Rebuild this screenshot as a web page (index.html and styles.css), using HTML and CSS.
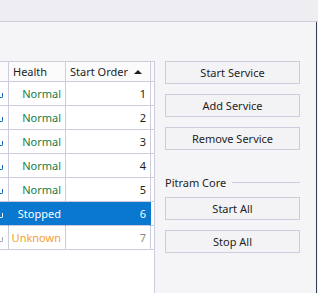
FILE: index.html
```html
<!DOCTYPE html>
<html lang="en">
<head>
    <meta charset="UTF-8">
    <title>Services</title>
    <link rel="stylesheet" href="styles.css">
</head>
<body>
    <div class="window">
        <div class="titlebar"></div>
        <div class="main">
            <div class="grid">
                <div class="row head">
                    <div class="cell"></div>
                    <div class="cell">Health</div>
                    <div class="cell sort">Start Order <span class="arrow"></span></div>
                    <div class="cell fill"></div>
                </div>
                <div class="row">
                    <div class="cell name"><span class="stub"></span></div>
                    <div class="cell num ok">Normal</div>
                    <div class="cell num">1</div>
                    <div class="cell fill"></div>
                </div>
                <div class="row">
                    <div class="cell name"><span class="stub"></span></div>
                    <div class="cell num ok">Normal</div>
                    <div class="cell num">2</div>
                    <div class="cell fill"></div>
                </div>
                <div class="row">
                    <div class="cell name"><span class="stub"></span></div>
                    <div class="cell num ok">Normal</div>
                    <div class="cell num">3</div>
                    <div class="cell fill"></div>
                </div>
                <div class="row">
                    <div class="cell name"><span class="stub"></span></div>
                    <div class="cell num ok">Normal</div>
                    <div class="cell num">4</div>
                    <div class="cell fill"></div>
                </div>
                <div class="row">
                    <div class="cell name"><span class="stub"></span></div>
                    <div class="cell num ok">Normal</div>
                    <div class="cell num">5</div>
                    <div class="cell fill"></div>
                </div>
                <div class="row selected">
                    <div class="cell name"><span class="stub"></span></div>
                    <div class="cell num">Stopped</div>
                    <div class="cell num">6</div>
                    <div class="cell fill"></div>
                </div>
                <div class="row muted">
                    <div class="cell name"><span class="stub"></span></div>
                    <div class="cell num unknown">Unknown</div>
                    <div class="cell num">7</div>
                    <div class="cell fill"></div>
                </div>
            </div>
            <div class="panel">
                <button class="btn">Start Service</button>
                <button class="btn">Add Service</button>
                <button class="btn">Remove Service</button>
                <div class="group">Pitram Core</div>
                <button class="btn">Start All</button>
                <button class="btn">Stop All</button>
            </div>
        </div>
    </div>
</body>
</html>
```
FILE: styles.css
```css
body {
    margin: 0;
    font-family: "Segoe UI", "Noto Sans", sans-serif;
    font-size: 11px;
    color: #1e1e1e;
}

.window {
    width: 318px;
    height: 293px;
    overflow: hidden;
    background: #f5f5f7;
    display: flex;
    flex-direction: column;
}

.titlebar {
    height: 21px;
    background: #eeeef2;
    border-bottom: 1px solid #ccccdc;
}

.main {
    flex: 1;
    display: flex;
    border-right: 1px solid #2e3c58;
    margin-right: 1px;
}

.grid {
    width: 155px;
    box-sizing: border-box;
    margin-top: 39px;
    background: #fff;
    border-top: 1px solid #ccccdc;
    border-right: 1px solid #ccccdc;
}

.row {
    display: grid;
    grid-template-columns: 9px 57px 85px 3px;
    height: 24px;
}

.row.head {
    height: 20px;
    background: #fbfbfc;
}

.cell {
    box-sizing: border-box;
    border-right: 1px solid #ccccdc;
    border-bottom: 1px solid #ccccdc;
    display: flex;
    align-items: center;
    padding: 0 4px;
    white-space: nowrap;
    overflow: hidden;
}

.cell.fill {
    border-right: none;
    padding: 0;
}

.cell.num {
    justify-content: flex-end;
}

/* the clipped end of a column that is scrolled out of view */
.cell.name {
    padding: 3px 0 0 0;
    color: #1569b8;
}

.stub {
    width: 3px;
    height: 5px;
    box-sizing: border-box;
    border-right: 1px solid currentColor;
    border-bottom: 1px solid currentColor;
    border-bottom-right-radius: 2px;
}

.head .cell {
    padding-left: 4px;
}

.sort {
    justify-content: space-between;
}

.arrow {
    width: 0;
    height: 0;
    border-left: 4px solid transparent;
    border-right: 4px solid transparent;
    border-bottom: 4px solid #1e1e1e;
    margin-right: 4px;
}

.ok {
    color: #13803f;
}

.unknown {
    color: #f5a030;
}

.muted .num:not(.unknown) {
    color: #8a8a8a;
}

.muted .name {
    color: #9aa6b4;
}

.selected .cell {
    background: #0a78cf;
    color: #fff;
    border-right-color: #0a78cf;
}

.selected .cell.fill {
    background: #fff;
}

.panel {
    flex: 1;
    padding: 39px 0 0 10px;
    display: flex;
    flex-direction: column;
}

.btn {
    width: 135px;
    height: 23px;
    margin-bottom: 10px;
    box-sizing: border-box;
    background: #f3f3f6;
    border: 1px solid #ccccdc;
    font-family: inherit;
    font-size: 11px;
    color: #1e1e1e;
    padding: 0;
}

.group {
    width: 135px;
    display: flex;
    align-items: center;
    gap: 6px;
    margin: 14px 0 7px;
    height: 16px;
}

.group::after {
    content: "";
    flex: 1;
    border-top: 1px solid #ccccdc;
}
```
